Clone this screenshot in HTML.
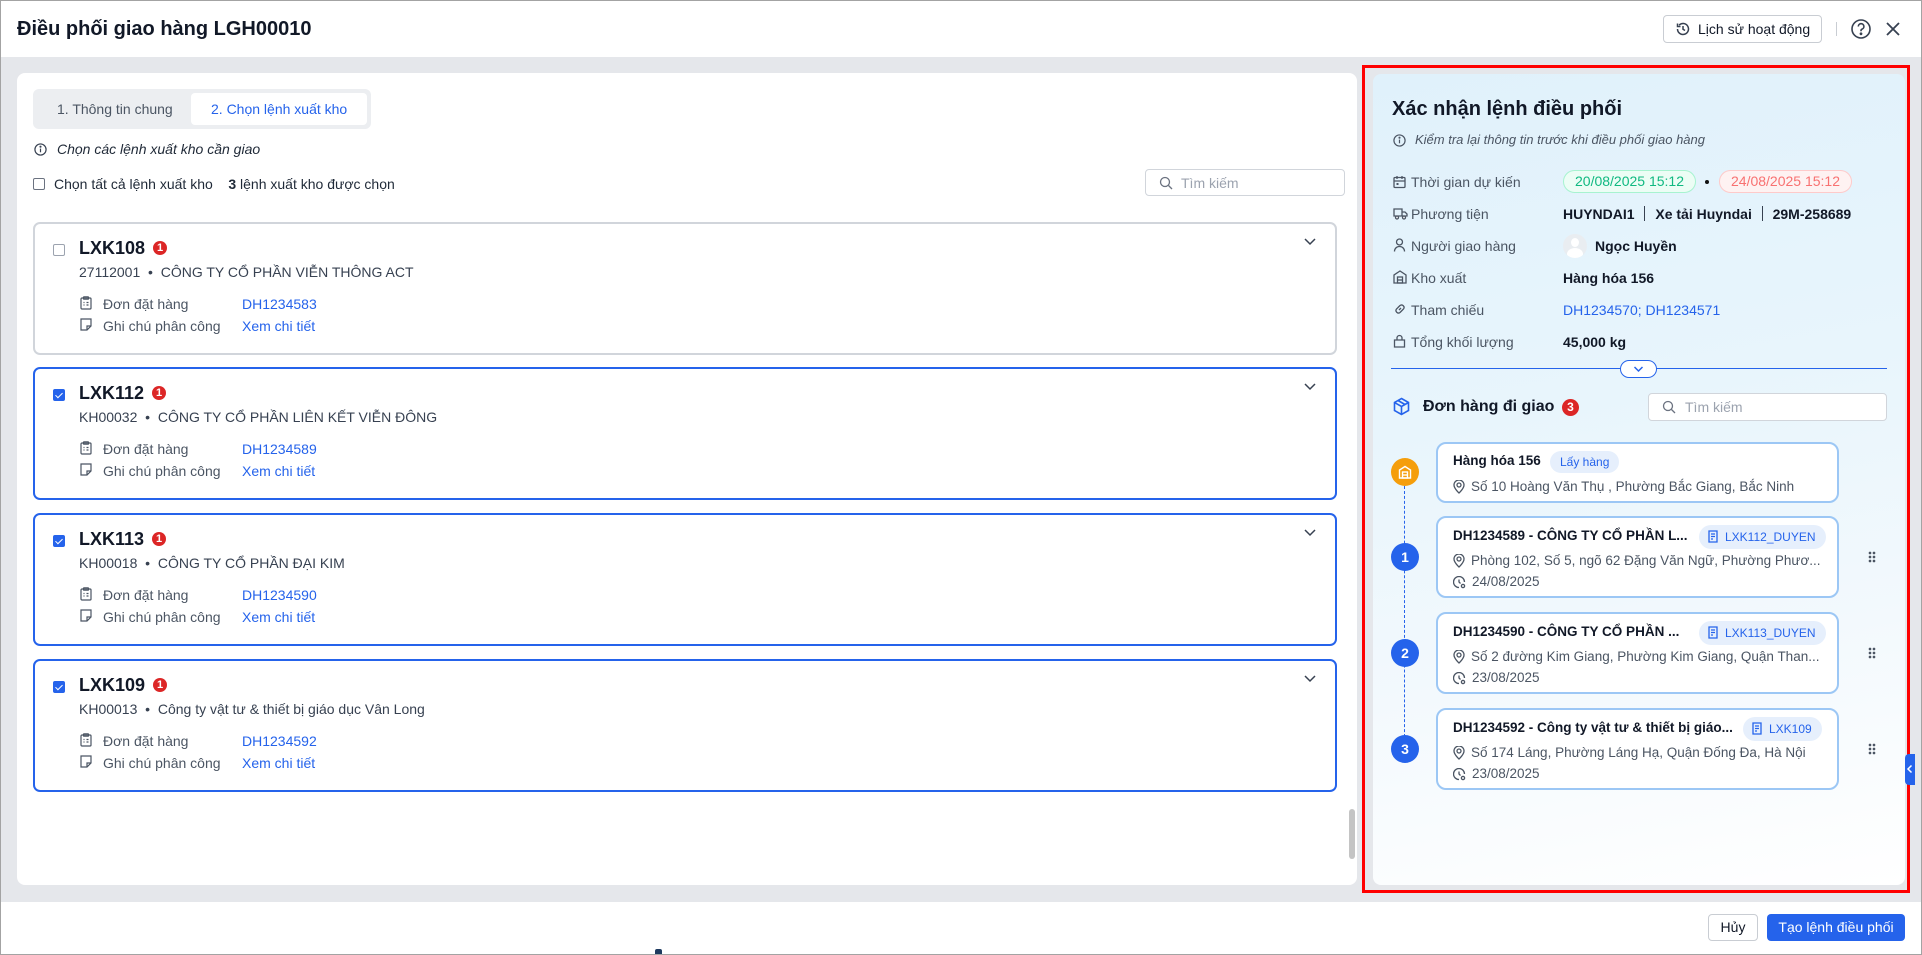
<!DOCTYPE html>
<html><head><meta charset="utf-8"><style>
*{box-sizing:border-box;margin:0;padding:0}
body{width:1922px;height:955px;overflow:hidden;font-family:"Liberation Sans",sans-serif;font-size:14px;color:#1f2937;background:#fff;position:relative}
.a{position:absolute}
.frame{position:absolute;left:0;top:0;width:1922px;height:955px;border:1px solid #a3a3a3;pointer-events:none}
.hdr{left:0;top:0;width:1922px;height:57px;background:#fff}
.gray{left:0;top:57px;width:1922px;height:845px;background:#e5e7eb}
.lp{left:17px;top:73px;width:1340px;height:812px;background:#fff;border-radius:8px}
.tabs{left:33px;top:89px;width:338px;height:40px;background:#eceef1;border-radius:6px}
.tab{position:absolute;top:4px;height:32px;line-height:32px;font-size:14px}
.card{position:absolute;left:33px;width:1304px;height:133px;border:2px solid #d1d5db;border-radius:7px;background:#fff}
.card.sel{border-color:#2563eb}
.cb{position:absolute;left:18px;top:20px;width:12px;height:12px;border:1px solid #9ca3af;border-radius:2px;background:#fff}
.card.sel .cb{background:#2563eb;border-color:#2563eb}
.card.sel .cb:after{content:"";position:absolute;left:3px;top:1px;width:3px;height:6px;border:solid #fff;border-width:0 1.5px 1.5px 0;transform:rotate(45deg)}
.ct{position:absolute;left:44px;top:14px;font-size:18px;font-weight:bold;color:#111827}
.badge{display:inline-block;width:14px;height:14px;border-radius:50%;background:#dc2626;color:#fff;font-size:11px;line-height:14px;text-align:center;vertical-align:3px;margin-left:8px;font-weight:bold}
.cs{position:absolute;left:44px;top:40px;font-size:14px;color:#374151}
.row{position:absolute;left:45px;font-size:14px;color:#4b5563}
.row .lk{position:absolute;left:162px;top:0;color:#2563eb;white-space:nowrap}
.row span.t{position:absolute;left:23px;white-space:nowrap}
.chev{position:absolute;right:18px;top:12px}
.red{left:1362px;top:65px;width:548px;height:828px;border:3px solid #ff0000}
.rp{left:1373px;top:74px;width:532px;height:811px;border-radius:8px;background:linear-gradient(170deg,#e0f1fb 0%,#e8f5fc 40%,#f3f9fd 70%,#fff 100%)}
.lbl{position:absolute;left:1411px;color:#4b5563;font-size:14px}
.ic{position:absolute;left:1393px}
.val{position:absolute;left:1563px;font-weight:bold;font-size:14px;color:#111827;white-space:nowrap}
.pill{position:absolute;height:23px;line-height:21px;border-radius:12px;padding:0 11px;font-size:14px}
.oc{position:absolute;left:1436px;width:403px;border:2px solid #9cc7f5;border-radius:10px;background:#fff}
.ot{position:absolute;left:15px;top:10px;font-weight:bold;font-size:13.5px;color:#111827;white-space:nowrap}
.tag{position:absolute;height:24px;line-height:24px;border-radius:12px;background:#e6effc;color:#2563eb;font-size:12px;padding:0 10px 0 8px;white-space:nowrap}
.ol{position:absolute;left:15px;font-size:13.5px;color:#4b5563;white-space:nowrap}
.ol svg{vertical-align:-3px;margin-right:6px}
.num{position:absolute;left:1391px;width:28px;height:28px;border-radius:50%;background:#2563eb;color:#fff;font-weight:bold;text-align:center;line-height:28px;font-size:14px}
.dots{position:absolute;left:1868px;width:8px;height:12px;background:radial-gradient(circle,#4b5563 1.2px,transparent 1.5px) 0 0/4px 4px}
</style></head><body>
<div class="a hdr"></div>
<div class="a" style="left:17px;top:18px;font-size:20px;font-weight:bold;color:#111827">Điều phối giao hàng LGH00010</div>
<div class="a" style="left:1663px;top:15px;width:159px;height:28px;border:1px solid #c9cdd3;border-radius:4px;font-size:14px;line-height:26px;padding-left:34px;color:#111827">Lịch sử hoạt động</div>
<svg class="a" style="left:1675px;top:21px" width="16" height="16" viewBox="0 0 16 16" fill="none" stroke="#374151" stroke-width="1.5"><path d="M2.5 8a5.5 5.5 0 1 0 1.6-3.9M2.5 2.5v3h3"/><path d="M8 5v3.2l2 1.3"/></svg>
<div class="a" style="left:1836px;top:22px;width:1px;height:14px;background:#c9cdd3"></div>
<svg class="a" style="left:1850px;top:18px" width="22" height="22" viewBox="0 0 22 22" fill="none" stroke="#374151" stroke-width="1.6"><circle cx="11" cy="11" r="9"/><path d="M8.3 8.5a2.8 2.8 0 1 1 3.8 2.6c-.7.3-1.1.9-1.1 1.6v.6"/><circle cx="11" cy="15.8" r=".6" fill="#374151"/></svg>
<svg class="a" style="left:1885px;top:21px" width="16" height="16" viewBox="0 0 16 16" stroke="#374151" stroke-width="1.8"><path d="M2 2l12 12M14 2L2 14"/></svg>

<div class="a gray"></div>
<div class="a lp"></div>
<div class="a tabs">
 <div class="tab" style="left:24px;color:#4b5563">1. Thông tin chung</div>
 <div class="tab" style="left:158px;width:176px;background:#fff;border-radius:4px;color:#2563eb;padding-left:20px">2. Chọn lệnh xuất kho</div>
</div>
<svg class="a" style="left:34px;top:143px" width="13" height="13" viewBox="0 0 14 14" fill="none" stroke="#374151" stroke-width="1.3"><circle cx="7" cy="7" r="6"/><path d="M7 6v4"/><circle cx="7" cy="4" r=".5" fill="#374151"/></svg>
<div class="a" style="left:57px;top:141px;font-style:italic;font-size:14px;color:#1f2937">Chọn các lệnh xuất kho cần giao</div>
<div class="a" style="left:33px;top:178px;width:12px;height:12px;border:1px solid #6b7280;border-radius:2px"></div>
<div class="a" style="left:54px;top:176px;font-size:14px;color:#1f2937">Chọn tất cả lệnh xuất kho &nbsp;&nbsp;&nbsp;<b>3</b> lệnh xuất kho được chọn</div>
<div class="a" style="left:1145px;top:169px;width:200px;height:27px;border:1px solid #d1d5db;border-radius:4px;background:#fff"></div>
<svg class="a" style="left:1159px;top:176px" width="14" height="14" viewBox="0 0 14 14" fill="none" stroke="#6b7280" stroke-width="1.3"><circle cx="6" cy="6" r="4.5"/><path d="M9.5 9.5L13 13"/></svg>
<div class="a" style="left:1181px;top:175px;color:#9ca3af;font-size:14px">Tìm kiếm</div>

<div class="card" style="top:222px">
 <div class="cb"></div><div class="ct">LXK108<span class="badge">1</span></div>
 <div class="cs">27112001 &nbsp;•&nbsp; CÔNG TY CỔ PHẦN VIỄN THÔNG ACT</div>
 <div class="row" style="top:72px"><svg width="12" height="14" viewBox="0 0 12 14" fill="none" stroke="#4b5563" stroke-width="1.2"><rect x="1" y="2" width="10" height="11" rx="1"/><rect x="3.5" y="0.8" width="5" height="2.4" rx=".5"/><path d="M3.5 6.5h1M6.5 6.5h2M3.5 9h1M6.5 9h2"/></svg><span class="t">Đơn đặt hàng</span><span class="lk">DH1234583</span></div>
 <div class="row" style="top:94px"><svg width="12" height="13" viewBox="0 0 12 13" fill="none" stroke="#4b5563" stroke-width="1.2"><path d="M1 1h10v7l-4 4H1z"/><path d="M7 12V8h4"/></svg><span class="t">Ghi chú phân công</span><span class="lk">Xem chi tiết</span></div>
 <svg class="chev" width="14" height="10" viewBox="0 0 14 10" fill="none" stroke="#374151" stroke-width="1.5"><path d="M2 3l5 5 5-5"/></svg>
</div>
<div class="card sel" style="top:367px">
 <div class="cb"></div><div class="ct">LXK112<span class="badge">1</span></div>
 <div class="cs">KH00032 &nbsp;•&nbsp; CÔNG TY CỔ PHẦN LIÊN KẾT VIỄN ĐÔNG</div>
 <div class="row" style="top:72px"><svg width="12" height="14" viewBox="0 0 12 14" fill="none" stroke="#4b5563" stroke-width="1.2"><rect x="1" y="2" width="10" height="11" rx="1"/><rect x="3.5" y="0.8" width="5" height="2.4" rx=".5"/><path d="M3.5 6.5h1M6.5 6.5h2M3.5 9h1M6.5 9h2"/></svg><span class="t">Đơn đặt hàng</span><span class="lk">DH1234589</span></div>
 <div class="row" style="top:94px"><svg width="12" height="13" viewBox="0 0 12 13" fill="none" stroke="#4b5563" stroke-width="1.2"><path d="M1 1h10v7l-4 4H1z"/><path d="M7 12V8h4"/></svg><span class="t">Ghi chú phân công</span><span class="lk">Xem chi tiết</span></div>
 <svg class="chev" width="14" height="10" viewBox="0 0 14 10" fill="none" stroke="#374151" stroke-width="1.5"><path d="M2 3l5 5 5-5"/></svg>
</div>
<div class="card sel" style="top:513px">
 <div class="cb"></div><div class="ct">LXK113<span class="badge">1</span></div>
 <div class="cs">KH00018 &nbsp;•&nbsp; CÔNG TY CỔ PHẦN ĐẠI KIM</div>
 <div class="row" style="top:72px"><svg width="12" height="14" viewBox="0 0 12 14" fill="none" stroke="#4b5563" stroke-width="1.2"><rect x="1" y="2" width="10" height="11" rx="1"/><rect x="3.5" y="0.8" width="5" height="2.4" rx=".5"/><path d="M3.5 6.5h1M6.5 6.5h2M3.5 9h1M6.5 9h2"/></svg><span class="t">Đơn đặt hàng</span><span class="lk">DH1234590</span></div>
 <div class="row" style="top:94px"><svg width="12" height="13" viewBox="0 0 12 13" fill="none" stroke="#4b5563" stroke-width="1.2"><path d="M1 1h10v7l-4 4H1z"/><path d="M7 12V8h4"/></svg><span class="t">Ghi chú phân công</span><span class="lk">Xem chi tiết</span></div>
 <svg class="chev" width="14" height="10" viewBox="0 0 14 10" fill="none" stroke="#374151" stroke-width="1.5"><path d="M2 3l5 5 5-5"/></svg>
</div>
<div class="card sel" style="top:659px">
 <div class="cb"></div><div class="ct">LXK109<span class="badge">1</span></div>
 <div class="cs">KH00013 &nbsp;•&nbsp; Công ty vật tư &amp; thiết bị giáo dục Vân Long</div>
 <div class="row" style="top:72px"><svg width="12" height="14" viewBox="0 0 12 14" fill="none" stroke="#4b5563" stroke-width="1.2"><rect x="1" y="2" width="10" height="11" rx="1"/><rect x="3.5" y="0.8" width="5" height="2.4" rx=".5"/><path d="M3.5 6.5h1M6.5 6.5h2M3.5 9h1M6.5 9h2"/></svg><span class="t">Đơn đặt hàng</span><span class="lk">DH1234592</span></div>
 <div class="row" style="top:94px"><svg width="12" height="13" viewBox="0 0 12 13" fill="none" stroke="#4b5563" stroke-width="1.2"><path d="M1 1h10v7l-4 4H1z"/><path d="M7 12V8h4"/></svg><span class="t">Ghi chú phân công</span><span class="lk">Xem chi tiết</span></div>
 <svg class="chev" width="14" height="10" viewBox="0 0 14 10" fill="none" stroke="#374151" stroke-width="1.5"><path d="M2 3l5 5 5-5"/></svg>
</div>
<div class="a" style="left:1349px;top:809px;width:6px;height:50px;background:#c4c4c4;border-radius:3px"></div>

<div class="a red"></div>
<div class="a rp"></div>
<div class="a" style="left:1392px;top:98px;font-size:20px;font-weight:bold;color:#111827">Xác nhận lệnh điều phối</div>
<svg class="a" style="left:1393px;top:134px" width="13" height="13" viewBox="0 0 14 14" fill="none" stroke="#4b5563" stroke-width="1.3"><circle cx="7" cy="7" r="6"/><path d="M7 6v4"/><circle cx="7" cy="4" r=".5" fill="#4b5563"/></svg>
<div class="a" style="left:1415px;top:132px;font-style:italic;font-size:13px;color:#4b5563">Kiểm tra lại thông tin trước khi điều phối giao hàng</div>

<svg class="ic" style="top:175px" width="13" height="14" viewBox="0 0 13 14" fill="none" stroke="#4b5563" stroke-width="1.3"><rect x="1" y="2.5" width="11" height="10" rx="1"/><path d="M1 6h11M4 1v3M9 1v3"/><rect x="3.5" y="8" width="2" height="2" fill="#4b5563" stroke="none"/></svg>
<div class="lbl" style="top:174px">Thời gian dự kiến</div>
<div class="pill" style="left:1563px;top:170px;background:#ecfdf5;border:1px solid #a7f3d0;color:#10b981">20/08/2025 15:12</div>
<div class="a" style="left:1705px;top:180px;width:4px;height:4px;border-radius:50%;background:#111"></div>
<div class="pill" style="left:1719px;top:170px;background:#fef2f2;border:1px solid #fecaca;color:#f87171">24/08/2025 15:12</div>

<svg class="ic" style="top:207px" width="15" height="13" viewBox="0 0 15 13" fill="none" stroke="#4b5563" stroke-width="1.3"><path d="M1 2h8v7H1zM9 5h3l2 2v2H9"/><circle cx="4" cy="10.5" r="1.5" fill="#fff"/><circle cx="11" cy="10.5" r="1.5" fill="#fff"/></svg>
<div class="lbl" style="top:206px">Phương tiện</div>
<div class="val" style="top:206px">HUYNDAI1 <span style="display:inline-block;width:1px;height:15px;background:#374151;vertical-align:-2px;margin:0 6px"></span> Xe tải Huyndai <span style="display:inline-block;width:1px;height:15px;background:#374151;vertical-align:-2px;margin:0 6px"></span> 29M-258689</div>

<svg class="ic" style="top:238px" width="13" height="14" viewBox="0 0 13 14" fill="none" stroke="#4b5563" stroke-width="1.3"><circle cx="6.5" cy="4" r="3"/><path d="M1.5 13.5c0-3 2.2-5 5-5s5 2 5 5"/></svg>
<div class="lbl" style="top:238px">Người giao hàng</div>
<div class="a" style="left:1563px;top:234px;width:24px;height:24px;border-radius:50%;background:#e9edf1;overflow:hidden"><div style="position:absolute;left:8px;top:4px;width:8px;height:9px;border-radius:50%;background:#fff"></div><div style="position:absolute;left:4px;top:14px;width:16px;height:12px;border-radius:50%;background:#fff"></div></div>
<div class="val" style="left:1595px;top:238px">Ngọc Huyền</div>

<svg class="ic" style="top:270px" width="14" height="14" viewBox="0 0 14 14" fill="none" stroke="#4b5563" stroke-width="1.3"><path d="M1 13V5l6-4 6 4v8z"/><rect x="4.5" y="7" width="5" height="6"/><path d="M4.5 10h5"/></svg>
<div class="lbl" style="top:270px">Kho xuất</div>
<div class="val" style="top:270px">Hàng hóa 156</div>

<svg class="ic" style="top:302px" width="14" height="14" viewBox="0 0 14 14" fill="none" stroke="#4b5563" stroke-width="1.3"><path d="M6 8l2-2M5 5.5l2-2a2.5 2.5 0 0 1 3.5 3.5l-2 2M9 8.5l-2 2A2.5 2.5 0 0 1 3.5 7l2-2"/></svg>
<div class="lbl" style="top:302px">Tham chiếu</div>
<div class="val" style="top:302px;font-weight:normal;color:#2563eb">DH1234570; DH1234571</div>

<svg class="ic" style="top:334px" width="13" height="14" viewBox="0 0 13 14" fill="none" stroke="#4b5563" stroke-width="1.3"><path d="M1.5 13V6h10v7z"/><path d="M4 6V4a2.5 2.5 0 0 1 5 0v2"/></svg>
<div class="lbl" style="top:334px">Tổng khối lượng</div>
<div class="val" style="top:334px">45,000 kg</div>

<div class="a" style="left:1391px;top:368px;width:496px;height:1px;background:#2563eb"></div>
<div class="a" style="left:1620px;top:360px;width:37px;height:18px;border:1px solid #2563eb;border-radius:9px;background:#fff"></div>
<svg class="a" style="left:1633px;top:365px" width="11" height="8" viewBox="0 0 11 8" fill="none" stroke="#2563eb" stroke-width="1.5"><path d="M1.5 2l4 4 4-4"/></svg>

<svg class="a" style="left:1393px;top:397px" width="17" height="19" viewBox="0 0 17 19" fill="none" stroke="#2563eb" stroke-width="1.6"><path d="M8.5 1.5l7 4v8l-7 4-7-4v-8z"/><path d="M1.5 5.5l7 4 7-4M8.5 9.5v8M5 3.5l7 4"/></svg>
<div class="a" style="left:1423px;top:398px;font-size:16px;font-weight:bold;color:#111827">Đơn hàng đi giao</div>
<div class="a" style="left:1562px;top:399px;width:17px;height:17px;border-radius:50%;background:#dc2626;color:#fff;font-size:12px;text-align:center;line-height:17px;font-weight:bold">3</div>
<div class="a" style="left:1648px;top:393px;width:239px;height:28px;border:1px solid #d1d5db;border-radius:4px;background:#fff"></div>
<svg class="a" style="left:1662px;top:400px" width="14" height="14" viewBox="0 0 14 14" fill="none" stroke="#6b7280" stroke-width="1.3"><circle cx="6" cy="6" r="4.5"/><path d="M9.5 9.5L13 13"/></svg>
<div class="a" style="left:1685px;top:399px;color:#9ca3af;font-size:14px">Tìm kiếm</div>

<div class="a" style="left:1404px;top:486px;height:256px;border-left:1px dashed #2563eb"></div>
<div class="a" style="left:1391px;top:458px;width:28px;height:28px;border-radius:50%;background:#f59e0b"></div>
<svg class="a" style="left:1398px;top:465px" width="14" height="14" viewBox="0 0 14 14" fill="none" stroke="#fff" stroke-width="1.4"><path d="M1.5 13V5l5.5-3.5L12.5 5v8z"/><rect x="4.5" y="7" width="5" height="6"/><path d="M4.5 10h5"/></svg>
<div class="num" style="top:543px">1</div>
<div class="num" style="top:639px">2</div>
<div class="num" style="top:735px">3</div>

<div class="oc" style="top:442px;height:61px">
 <div class="ot" style="top:9px">Hàng hóa 156</div>
 <div class="tag" style="left:112px;top:7px;padding:0 10px;height:22px;line-height:22px">Lấy hàng</div>
 <div class="ol" style="top:35px"><svg width="12" height="14" viewBox="0 0 12 14" fill="none" stroke="#4b5563" stroke-width="1.3"><path d="M6 13s5-4.5 5-8A5 5 0 0 0 1 5c0 3.5 5 8 5 8z"/><circle cx="6" cy="5" r="2"/></svg>Số 10 Hoàng Văn Thụ , Phường Bắc Giang, Bắc Ninh</div>
</div>
<div class="oc" style="top:516px;height:82px">
 <div class="ot">DH1234589 - CÔNG TY CỔ PHẦN L...</div>
 <div class="tag" style="left:261px;top:7px"><svg width="12" height="13" viewBox="0 0 12 13" fill="none" stroke="#2563eb" stroke-width="1.3" style="vertical-align:-2px;margin-right:6px"><path d="M2 1h8v11H2zM4 4h4M4 6.5h4M4 9h2"/></svg>LXK112_DUYEN</div>
 <div class="ol" style="top:35px"><svg width="12" height="14" viewBox="0 0 12 14" fill="none" stroke="#4b5563" stroke-width="1.3"><path d="M6 13s5-4.5 5-8A5 5 0 0 0 1 5c0 3.5 5 8 5 8z"/><circle cx="6" cy="5" r="2"/></svg>Phòng 102, Số 5, ngõ 62 Đặng Văn Ngữ, Phường Phươ...</div>
 <div class="ol" style="top:56px"><svg width="13" height="13" viewBox="0 0 13 13" fill="none" stroke="#4b5563" stroke-width="1.3"><path d="M11.5 6A5.5 5.5 0 1 0 6 11.5"/><path d="M6 3.5V6l1.5 1.5"/><circle cx="10" cy="10" r="1.6"/></svg>24/08/2025</div>
</div>
<div class="oc" style="top:612px;height:82px">
 <div class="ot">DH1234590 - CÔNG TY CỔ PHẦN ...</div>
 <div class="tag" style="left:261px;top:7px"><svg width="12" height="13" viewBox="0 0 12 13" fill="none" stroke="#2563eb" stroke-width="1.3" style="vertical-align:-2px;margin-right:6px"><path d="M2 1h8v11H2zM4 4h4M4 6.5h4M4 9h2"/></svg>LXK113_DUYEN</div>
 <div class="ol" style="top:35px"><svg width="12" height="14" viewBox="0 0 12 14" fill="none" stroke="#4b5563" stroke-width="1.3"><path d="M6 13s5-4.5 5-8A5 5 0 0 0 1 5c0 3.5 5 8 5 8z"/><circle cx="6" cy="5" r="2"/></svg>Số 2 đường Kim Giang, Phường Kim Giang, Quận Than...</div>
 <div class="ol" style="top:56px"><svg width="13" height="13" viewBox="0 0 13 13" fill="none" stroke="#4b5563" stroke-width="1.3"><path d="M11.5 6A5.5 5.5 0 1 0 6 11.5"/><path d="M6 3.5V6l1.5 1.5"/><circle cx="10" cy="10" r="1.6"/></svg>23/08/2025</div>
</div>
<div class="oc" style="top:708px;height:82px">
 <div class="ot">DH1234592 - Công ty vật tư &amp; thiết bị giáo...</div>
 <div class="tag" style="left:305px;top:7px"><svg width="12" height="13" viewBox="0 0 12 13" fill="none" stroke="#2563eb" stroke-width="1.3" style="vertical-align:-2px;margin-right:6px"><path d="M2 1h8v11H2zM4 4h4M4 6.5h4M4 9h2"/></svg>LXK109</div>
 <div class="ol" style="top:35px"><svg width="12" height="14" viewBox="0 0 12 14" fill="none" stroke="#4b5563" stroke-width="1.3"><path d="M6 13s5-4.5 5-8A5 5 0 0 0 1 5c0 3.5 5 8 5 8z"/><circle cx="6" cy="5" r="2"/></svg>Số 174 Láng, Phường Láng Hạ, Quận Đống Đa, Hà Nội</div>
 <div class="ol" style="top:56px"><svg width="13" height="13" viewBox="0 0 13 13" fill="none" stroke="#4b5563" stroke-width="1.3"><path d="M11.5 6A5.5 5.5 0 1 0 6 11.5"/><path d="M6 3.5V6l1.5 1.5"/><circle cx="10" cy="10" r="1.6"/></svg>23/08/2025</div>
</div>
<div class="dots" style="top:551px"></div>
<div class="dots" style="top:647px"></div>
<div class="dots" style="top:743px"></div>
<div class="a" style="left:1905px;top:754px;width:10px;height:31px;background:#2563eb;border-radius:4px 0 0 4px"></div>
<svg class="a" style="left:1906px;top:764px" width="8" height="10" viewBox="0 0 8 10" fill="none" stroke="#fff" stroke-width="1.5"><path d="M5.5 1.5L2 5l3.5 3.5"/></svg>

<div class="a" style="left:1708px;top:914px;width:50px;height:27px;border:1px solid #c9cdd3;border-radius:4px;text-align:center;line-height:25px;font-size:14px;color:#111827">Hủy</div>
<div class="a" style="left:1767px;top:914px;width:138px;height:27px;background:#2563eb;border-radius:4px;text-align:center;line-height:27px;font-size:14px;color:#fff">Tạo lệnh điều phối</div>
<div class="a" style="left:655px;top:949px;width:7px;height:6px;background:#1e3a5f;border-radius:2px 2px 0 0"></div>
<div class="frame"></div>
</body></html>
